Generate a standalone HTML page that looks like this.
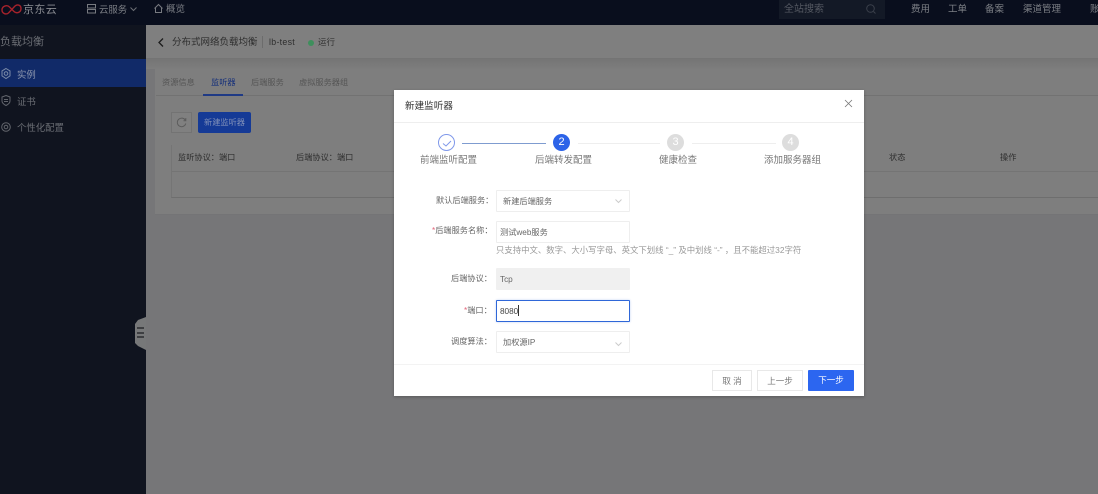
<!DOCTYPE html>
<html lang="zh"><head><meta charset="utf-8">
<style>
*{box-sizing:border-box}
html,body{margin:0;padding:0}
body{width:1098px;height:494px;overflow:hidden;position:relative;background:#767678;font-family:"Liberation Sans","Noto Sans CJK SC",sans-serif;font-size:8.2px}
.a{position:absolute;white-space:nowrap;line-height:1;margin-top:1px;filter:blur(.3px)}
.b{position:absolute}
#m{position:absolute;left:394px;top:90px;width:470px;height:306px;background:#fff;box-shadow:0 1px 3px rgba(0,0,0,.25)}
.lab{color:#666;font-size:8.2px}
.inp{position:absolute;left:102px;width:134px;height:22px;background:#fff;border:1px solid #eee;border-radius:1px;color:#666;font-size:8.2px;line-height:21px;padding-left:6px}
.step{position:absolute;width:17px;height:17px;border-radius:50%;text-align:center;line-height:17px;font-size:11px;color:#fff;background:#ddd}
.st{color:#777;font-size:9.5px}
svg{position:absolute;overflow:visible}
</style></head><body>
<div class="b" style="left:0;top:0;width:1098px;height:25px;background:#090e1d"></div>
<svg style="left:1px;top:3px" width="21" height="13" viewBox="0 0 21 13" fill="none" stroke="#a5222b" stroke-width="1.400"><path d="M11 6.500L8.500 4C6 1.500 1 3 1 7c0 3.500 4 5 6.500 3L14 3c2.500-2 6-1 6 2.500 0 4-4.500 5.500-7 3L11 6.500"/></svg>
<div class="a" style="left:23px;top:4px;font-size:11px;color:#8a8c92;letter-spacing:.4px">京东云</div>
<svg style="left:87px;top:4px" width="9" height="10" viewBox="0 0 9 10" fill="none" stroke="#777a80"><rect x=".5" y=".5" width="8" height="3.500"/><rect x=".5" y="5.500" width="8" height="3.500"/></svg>
<div class="a" style="left:99px;top:4px;font-size:9.4px;color:#7c7f85">云服务</div>
<svg style="left:130px;top:7px" width="7" height="4" viewBox="0 0 7 4" fill="none" stroke="#6c6f75"><path d="M.5.5l3 3 3-3"/></svg>
<svg style="left:154px;top:4px" width="9" height="9" viewBox="0 0 9 9" fill="none" stroke="#777a80"><path d="M.5 4.500L4.500.5l4 4M1.500 4v4.500h6V4"/></svg>
<div class="a" style="left:166px;top:4px;font-size:9.500px;color:#7c7f85">概览</div>
<div class="b" style="left:779px;top:0;width:106px;height:19px;background:#131926"></div>
<div class="a" style="left:784px;top:4px;font-size:10px;color:#555962">全站搜索</div>
<svg style="left:866px;top:4px" width="10" height="10" viewBox="0 0 10 10" fill="none" stroke="#3b404b"><circle cx="4.500" cy="4.500" r="3.800"/><path d="M7.500 7.500l2 2"/></svg>
<div class="a" style="left:911px;top:4px;font-size:9.500px;color:#7c7f85">费用</div>
<div class="a" style="left:948px;top:4px;font-size:9.500px;color:#7c7f85">工单</div>
<div class="a" style="left:985px;top:4px;font-size:9.500px;color:#7c7f85">备案</div>
<div class="a" style="left:1023px;top:4px;font-size:9.500px;color:#7c7f85">渠道管理</div>
<div class="a" style="left:1090px;top:4px;font-size:9.500px;color:#7c7f85">账</div>

<div class="b" style="left:0;top:25px;width:146px;height:469px;background:#10141f"></div>
<div class="a" style="left:0;top:36px;font-size:11px;color:#6b6e74">负载均衡</div>
<div class="b" style="left:0;top:59px;width:146px;height:28px;background:#112a68"></div>
<svg style="left:1px;top:68px" width="10" height="11" viewBox="0 0 10 11" fill="none" stroke="#7b8ba8"><path d="M5 .5l4 2.400v5L5 10.500l-4-2.600v-5z"/><circle cx="5" cy="5.500" r="1.800"/></svg>
<div class="a" style="left:17px;top:69px;font-size:9.400px;color:#8d97ae">实例</div>
<svg style="left:1px;top:95px" width="10" height="11" viewBox="0 0 10 11" fill="none" stroke="#62656c"><path d="M5 .5l4 1.500v4c0 2-2 3.500-4 4.500-2-1-4-2.500-4-4.500V2z"/><path d="M3 4.500h4M3 6.500h4"/></svg>
<div class="a" style="left:17px;top:96px;font-size:9.400px;color:#6b6e74">证书</div>
<svg style="left:1px;top:122px" width="10" height="10" viewBox="0 0 10 10" fill="none" stroke="#62656c"><circle cx="5" cy="5" r="4.300"/><circle cx="5" cy="5" r="1.800"/></svg>
<div class="a" style="left:17px;top:122px;font-size:9.400px;color:#6b6e74">个性化配置</div>

<div class="b" style="left:146px;top:25px;width:952px;height:34px;background:#7f7f7f;border-bottom:1px solid #747474"></div>
<div class="b" style="left:146px;top:59px;width:952px;height:10px;background:linear-gradient(#757575,#7d7d7d)"></div>
<div class="b" style="left:155px;top:69px;width:943px;height:146px;background:#7e7e7e;border-bottom:1px solid #747476"></div>
<svg style="left:158px;top:38px" width="6" height="9" viewBox="0 0 6 9" fill="none" stroke="#1c1c1c" stroke-width="1.300"><path d="M5 .5l-4 4 4 4"/></svg>
<div class="a" style="left:172px;top:37px;font-size:9.500px;color:#2e2e2e">分布式网络负载均衡</div>
<div class="b" style="left:262px;top:36px;width:1px;height:12px;background:#6c6c6c"></div>
<div class="a" style="left:269px;top:37px;font-size:8.800px;color:#2e2e2e;letter-spacing:.3px">lb-test</div>
<div class="b" style="left:308px;top:40px;width:6px;height:6px;border-radius:50%;background:#3e8f5c"></div>
<div class="a" style="left:318px;top:37px;font-size:8.500px;color:#333">运行</div>

<div class="b" style="left:156px;top:95px;width:942px;height:1px;background:#727272"></div>
<div class="b" style="left:203px;top:94px;width:40px;height:2px;background:#1f3a85"></div>
<div class="a" style="left:162px;top:78px;font-size:8.200px;color:#555">资源信息</div>
<div class="a" style="left:211px;top:78px;font-size:8.200px;color:#16307a">监听器</div>
<div class="a" style="left:251px;top:78px;font-size:8.200px;color:#555">后端服务</div>
<div class="a" style="left:299px;top:78px;font-size:8.200px;color:#555">虚拟服务器组</div>
<div class="b" style="left:171px;top:112px;width:21px;height:21px;border:1px solid #737373;background:#808080"></div>
<svg style="left:176px;top:117px" width="11" height="11" viewBox="0 0 11 11" fill="none" stroke="#5c5c5c"><path d="M9.500 3.500A4.300 4.300 0 1 0 9.800 6.500M9.800 1v2.800H7.500"/></svg>
<div class="b" style="left:198px;top:112px;width:53px;height:21px;background:#153a96;border-radius:2px"></div>
<div class="a" style="left:204px;top:118px;font-size:8.200px;color:#7f8fb8">新建监听器</div>
<div class="b" style="left:171px;top:145px;width:927px;height:53px;border-left:1px solid #757575;border-bottom:1px solid #6e6e6e"></div>
<div class="b" style="left:172px;top:171px;width:926px;height:1px;background:#747474"></div>
<div class="a" style="left:178px;top:153px;font-size:8.200px;color:#2f2f2f">监听协议：端口</div>
<div class="a" style="left:296px;top:153px;font-size:8.200px;color:#2f2f2f">后端协议：端口</div>
<div class="a" style="left:889px;top:153px;font-size:8.200px;color:#2f2f2f">状态</div>
<div class="a" style="left:1000px;top:153px;font-size:8.200px;color:#2f2f2f">操作</div>

<svg style="left:135px;top:317px" width="11" height="33" viewBox="0 0 11 33"><path d="M11 0v33L3 29 0 26V7l3-4z" fill="#777879"/><path d="M2 11h7M2 16h7M2 20h7" stroke="#1c1d22" stroke-width="1.200"/></svg>

<div id="m">
<div class="a" style="left:11px;top:11px;font-size:9.600px;color:#333">新建监听器</div>
<svg style="left:450px;top:9px" width="9" height="9" viewBox="0 0 9 9" stroke="#777" fill="none" stroke-width=".8"><path d="M1 1l7 7M8 1l-7 7"/></svg>
<div class="b" style="left:0;top:32px;width:470px;height:1px;background:#eee"></div>

<div class="step" style="left:44px;top:44px;background:#fff;border:1px solid #7f98ea"></div>
<svg style="left:48px;top:50px" width="10" height="7" viewBox="0 0 10 7" fill="none" stroke="#7f98ea"><path d="M1 3.500l3 2.500 5-5"/></svg>
<div class="b" style="left:68px;top:53px;width:84px;height:1px;background:#7f9cd0"></div>
<div class="step" style="left:159px;top:44px;background:#2c63e8">2</div>
<div class="b" style="left:184px;top:53px;width:82px;height:1px;background:#eee"></div>
<div class="step" style="left:273px;top:44px">3</div>
<div class="b" style="left:298px;top:53px;width:84px;height:1px;background:#eee"></div>
<div class="step" style="left:388px;top:44px">4</div>
<div class="a st" style="left:26px;top:65px">前端监听配置</div>
<div class="a st" style="left:141px;top:65px">后端转发配置</div>
<div class="a st" style="left:265px;top:65px">健康检查</div>
<div class="a st" style="left:370px;top:65px">添加服务器组</div>

<div class="a lab" style="left:42px;top:106px">默认后端服务：</div>
<div class="inp" style="top:100px">新建后端服务</div>
<svg style="left:221px;top:109px" width="7" height="4" viewBox="0 0 7 4" fill="none" stroke="#ccc"><path d="M.5.5l3 3 3-3"/></svg>

<div class="a lab" style="left:38px;top:136px"><span style="color:#e2657a">*</span>后端服务名称：</div>
<div class="inp" style="top:131px;padding-left:3px">测试web服务</div>
<div class="a" style="left:102px;top:155px;font-size:8.400px;color:#999">只支持中文、数字、大小写字母、英文下划线 “_” 及中划线 “-” ，且不能超过32字符</div>

<div class="a lab" style="left:57px;top:184px">后端协议：</div>
<div class="inp" style="top:178px;background:#f0f0f0;border-color:#f0f0f0;padding-left:3px">Tcp</div>

<div class="a lab" style="left:70px;top:216px"><span style="color:#e2657a">*</span>端口：</div>
<div class="inp" style="top:210px;border-color:#2f67d8;padding-left:3px;color:#444;box-shadow:0 0 2px rgba(47,103,216,.3)">8080<span style="display:inline-block;width:1px;height:11px;background:#333;vertical-align:-2px"></span></div>

<div class="a lab" style="left:57px;top:247px">调度算法：</div>
<div class="inp" style="top:241px">加权源IP</div>
<svg style="left:221px;top:252px" width="7" height="4" viewBox="0 0 7 4" fill="none" stroke="#ccc"><path d="M.5.5l3 3 3-3"/></svg>

<div class="b" style="left:0;top:274px;width:470px;height:1px;background:#f3f3f3"></div>
<div class="b" style="left:318px;top:280px;width:40px;height:21px;border:1px solid #e8e8e8;text-align:center;line-height:20px;color:#777;font-size:8.500px">取 消</div>
<div class="b" style="left:363px;top:280px;width:46px;height:21px;border:1px solid #e8e8e8;text-align:center;line-height:20px;color:#777;font-size:8.500px">上一步</div>
<div class="b" style="left:414px;top:280px;width:46px;height:21px;background:#2c66f0;text-align:center;line-height:21px;color:#fff;font-size:8.500px;border-radius:1px">下一步</div>
</div>
</body></html>
